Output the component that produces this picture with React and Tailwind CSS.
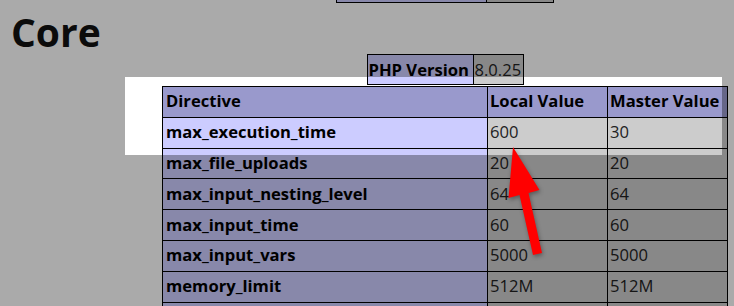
import React from 'react';

const rows = [
	['max_execution_time', '600', '30'],
	['max_file_uploads', '20', '20'],
	['max_input_nesting_level', '64', '64'],
	['max_input_time', '60', '60'],
	['max_input_vars', '5000', '5000'],
	['memory_limit', '512M', '512M'],
	['', '', ''],
];

export default function App() {
	return (
		<div
			className="relative w-[734px] h-[306px] overflow-hidden bg-white text-black"
			style={{fontFamily: '"Open Sans", "Noto Sans", sans-serif'}}
		>
			{/* tail of previous table */}
			<div className="ml-[162px] w-[566px] flex justify-center">
				<div className="mt-[-28px] grid grid-cols-[150px_67px] border-l border-black">
					<div className="h-[31px] bg-[#ccccff] border-r border-b border-black" />
					<div className="h-[31px] bg-[#cccccc] border-r border-b border-black" />
				</div>
			</div>

			<h1 className="h-[51px] pt-[9px] pl-[11px] text-[39px] leading-[40px] font-bold text-[#111]">Core</h1>

			{/* PHP Version */}
			<div className="ml-[162px] w-[566px] flex justify-center">
				<div className="grid grid-cols-[106px_50px] border-l border-t border-black text-[16.6px]">
					<div className="h-[30px] bg-[#ccccff] border-r border-b border-black font-bold leading-[29px] pl-[1px] whitespace-nowrap">
						PHP Version
					</div>
					<div className="h-[30px] bg-[#cccccc] border-r border-b border-black leading-[29px] pl-[1px] text-[#222]">
						8.0.25
					</div>
				</div>
			</div>

			{/* main table */}
			<div className="ml-[162px] mt-[1px] w-[566px]">
				<div className="grid grid-cols-[325px_120px_120px] border-l border-t border-black text-[16.6px]">
					<div className="h-[30.8px] bg-[#9999cc] border-r border-b border-black font-bold px-[3px] flex items-center">
						Directive
					</div>
					<div className="h-[30.8px] bg-[#9999cc] border-r border-b border-black font-bold px-[2px] flex items-center whitespace-nowrap">
						Local Value
					</div>
					<div className="h-[30.8px] bg-[#9999cc] border-r border-b border-black font-bold px-[2px] flex items-center whitespace-nowrap">
						Master Value
					</div>
					{rows.map(([name, local, master], i) => (
						<React.Fragment key={i}>
							<div className="h-[30.8px] bg-[#ccccff] border-r border-b border-black font-bold px-[3px] flex items-center">
								{name}
							</div>
							<div className="h-[30.8px] bg-[#cccccc] border-r border-b border-black px-[2px] flex items-center text-[#222]">
								{local}
							</div>
							<div className="h-[30.8px] bg-[#cccccc] border-r border-b border-black px-[2px] flex items-center text-[#222]">
								{master}
							</div>
						</React.Fragment>
					))}
				</div>
			</div>

			{/* spotlight */}
			<div className="absolute left-[125px] top-[77px] w-[597px] h-[78px] shadow-[0_0_0_2000px_rgba(0,0,0,0.333)]" />

			{/* arrow */}
			<svg
				className="absolute left-0 top-0 drop-shadow-[1px_2px_2px_rgba(0,0,0,0.35)]"
				width="734"
				height="306"
				viewBox="0 0 734 306"
			>
				<polygon
					points="513,147 539.5,190 528.5,193 542,253 533,255 519.5,195 508.5,198"
					fill="#ff0000"
				/>
			</svg>
		</div>
	);
}
